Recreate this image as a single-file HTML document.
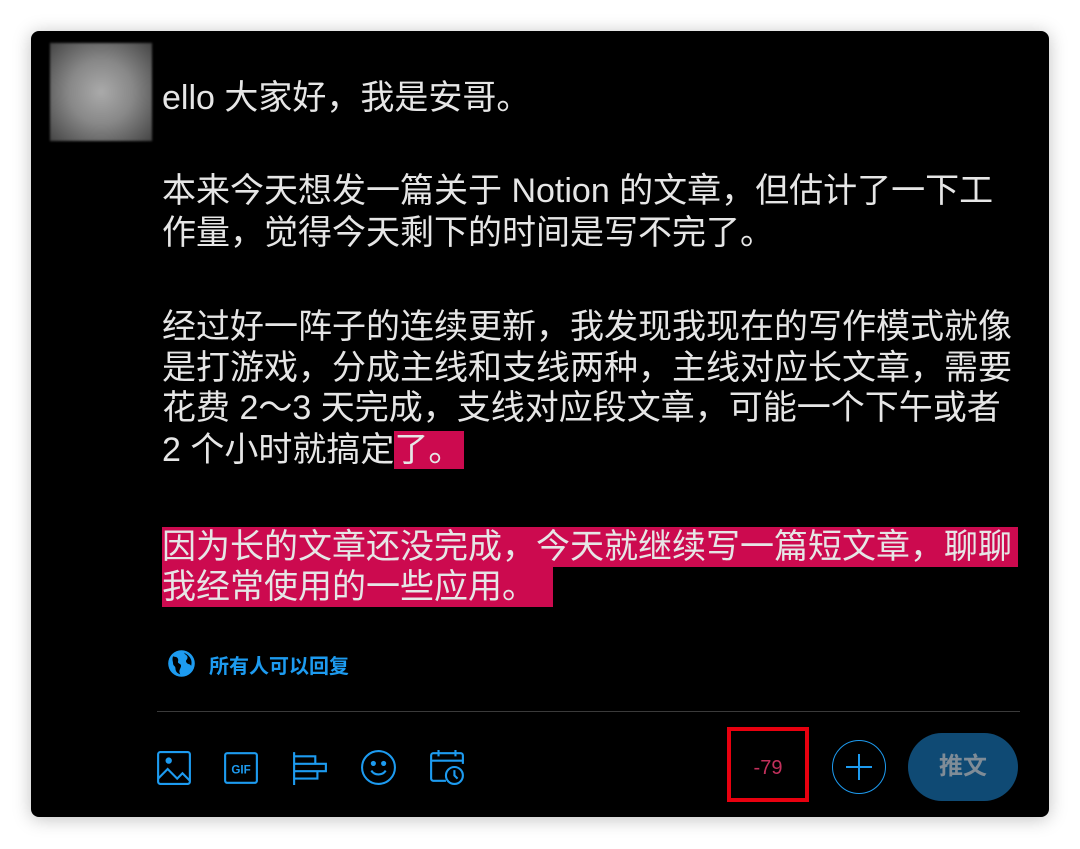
<!DOCTYPE html>
<html><head><meta charset="utf-8"><style>
body{margin:0;width:1080px;height:849px;background:#fff;position:relative;overflow:hidden;font-family:"Liberation Sans","Noto Sans CJK SC",sans-serif}
.card{position:absolute;left:31px;top:31px;width:1018px;height:786px;background:#000;border-radius:8px;box-shadow:0 2px 18px rgba(0,0,0,.25)}
.av{position:absolute;left:50px;top:43px;width:102px;height:98px;background:radial-gradient(circle at 50% 50%,#aaa 0%,#888 45%,#444 100%);filter:blur(1px)}
.l{position:absolute;left:162px;font-size:34px;line-height:40px;height:40px;color:#e6e6e6;white-space:nowrap}
.h{background:#cc0a4f}
</style></head><body>
<div class="card"></div>
<div class="av"></div>
<div class="l" style="top:78px">ello 大家好，我是安哥。</div>
<div class="l" style="top:171px">本来今天想发一篇关于 Notion 的文章，但估计了一下工</div>
<div class="l" style="top:213px">作量，觉得今天剩下的时间是写不完了。</div>
<div class="l" style="top:307px">经过好一阵子的连续更新，我发现我现在的写作模式就像</div>
<div class="l" style="top:348px">是打游戏，分成主线和支线两种，主线对应长文章，需要</div>
<div class="l" style="top:388px">花费 2～3 天完成，支线对应段文章，可能一个下午或者</div>
<div class="l" style="top:430px">2 个小时就搞定<span class="h" style="padding-right:2px">了。</span></div>
<div class="l h" style="top:527px;width:856px">因为长的文章还没完成，今天就继续写一篇短文章，聊聊</div>
<div class="l h" style="top:567px;width:391px">我经常使用的一些应用。</div>
<svg style="position:absolute;left:167px;top:649px" width="29" height="29" viewBox="0 0 24 24"><circle cx="12" cy="12" r="11" fill="#1d9bf0"/><path d="M5 6c2 1 3 0 4 2s-1 3 1 4 2 2 1 4-1 3 0 5c-3-1-4-3-4-5s-2-2-2-4-1-3 0-6zM14 3c1 2 3 2 3 4s-2 2-1 4 3 1 4 3c1-4 0-8-6-11z" fill="#000"/></svg>
<div style="position:absolute;left:209px;top:650px;font-size:20px;font-weight:bold;color:#1d9bf0">所有人可以回复</div>
<div style="position:absolute;left:157px;top:711px;width:863px;height:1px;background:#3a3a3a"></div>
<svg style="position:absolute;left:156px;top:750px" width="36" height="36" viewBox="0 0 34 34" fill="none" stroke="#1d9bf0" stroke-width="2"><rect x="2" y="2" width="30" height="30" rx="2"/><path d="M2 27l9-9 9 9 5-5 7 7"/><circle cx="12" cy="10" r="2" fill="#1d9bf0"/></svg>
<svg style="position:absolute;left:223px;top:750px" width="36" height="36" viewBox="0 0 34 34"><rect x="2" y="3" width="30" height="28" rx="2" fill="none" stroke="#1d9bf0" stroke-width="2"/><text x="17" y="22" font-size="11" font-weight="bold" fill="#1d9bf0" text-anchor="middle" font-family="Liberation Sans">GIF</text></svg>
<svg style="position:absolute;left:292px;top:750px" width="36" height="36" viewBox="0 0 34 34" fill="none" stroke="#1d9bf0" stroke-width="2"><path d="M2 2v31M2 6h20v7H2M2 13h30v7H2M2 20h22v7H2"/></svg>
<svg style="position:absolute;left:360px;top:749px" width="37" height="37" viewBox="0 0 36 36" fill="none" stroke="#1d9bf0" stroke-width="2"><circle cx="18" cy="18" r="16"/><circle cx="13" cy="14" r="1.5" fill="#1d9bf0"/><circle cx="23" cy="14" r="1.5" fill="#1d9bf0"/><path d="M11 21c3 5 11 5 14 0"/></svg>
<svg style="position:absolute;left:429px;top:749px" width="36" height="36" viewBox="0 0 34 34" fill="none" stroke="#1d9bf0" stroke-width="2"><path d="M16 30H4a2 2 0 0 1-2-2V6a2 2 0 0 1 2-2h26a2 2 0 0 1 2 2v8M2 11h30M9 1v6M25 1v6"/><circle cx="24" cy="25" r="8"/><path d="M24 20v5l3 3"/></svg>
<div style="position:absolute;left:727px;top:727px;width:74px;height:67px;border:4px solid #e8000f"></div>
<div style="position:absolute;left:731px;top:757px;width:74px;text-align:center;font-size:20px;color:#c3305c">-79</div>
<div style="position:absolute;left:832px;top:740px;width:52px;height:52px;border:1.5px solid #1d9bf0;border-radius:50%"></div>
<div style="position:absolute;left:846px;top:766px;width:26px;height:2px;background:#1d9bf0"></div>
<div style="position:absolute;left:858px;top:754px;width:2px;height:26px;background:#1d9bf0"></div>
<div style="position:absolute;left:908px;top:733px;width:110px;height:68px;border-radius:34px;background:#0f4a74;color:#7f8c97;font-size:24px;font-weight:bold;line-height:68px;text-align:center">推文</div>
</body></html>
